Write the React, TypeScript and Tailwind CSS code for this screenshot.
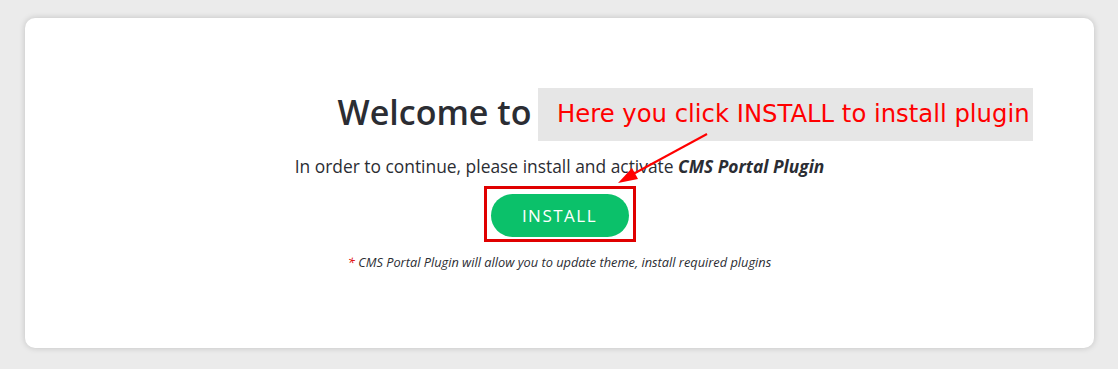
import React from "react";

export default function App() {
  return (
    <div className="w-[1118px] h-[369px] bg-[#ebebeb] pt-[18px] pl-[25px] pr-[24px]" style={{ fontFamily: '"Open Sans", "Noto Sans", sans-serif' }}>
      <div className="relative h-[330px] bg-white rounded-[10px] shadow-[0_0_6px_rgba(0,0,0,0.18)] flex flex-col items-center pt-[72px]">
        <h1 className="text-[34px] leading-[44px] font-semibold text-[#2b2d33]">
          Welcome to<span className="inline-block w-[250px]"></span>
        </h1>
        <p className="mt-[20px] text-[17.4px] leading-[24px] text-[#2b2d33]">
          In order to continue, please install and activate <b className="italic font-bold">CMS Portal Plugin</b>
        </p>
        <div className="mt-[8px] border-[3px] border-[#e00000] px-[4px] pt-[5px] pb-[2px]">
          <button className="w-[138px] h-[43px] rounded-full bg-[#0bc16a] text-white text-[17px] tracking-[1.5px]">
            INSTALL
          </button>
        </div>
        <p className="mt-[11px] text-[12.8px] italic text-[#2b2d33]">
          <span className="text-[#e00000]">*</span> CMS Portal Plugin will allow you to update theme, install required plugins
        </p>

        <div
          className="absolute left-[513px] top-[70px] w-[495px] h-[53px] bg-[#e6e6e6] flex items-center pl-[19px] text-[24.3px] text-[#ff0000]"
          style={{ fontFamily: '"DejaVu Sans", Verdana, sans-serif' }}
        >
          Here you click INSTALL to install plugin
        </div>
        <svg className="absolute left-[585px] top-[112px]" width="100" height="60" viewBox="0 0 100 60">
          <line x1="97" y1="4" x2="14" y2="49" stroke="#ff0000" strokeWidth="2" />
          <polygon points="8,53 22,38 28,49" fill="#ff0000" />
        </svg>
      </div>
    </div>
  );
}
